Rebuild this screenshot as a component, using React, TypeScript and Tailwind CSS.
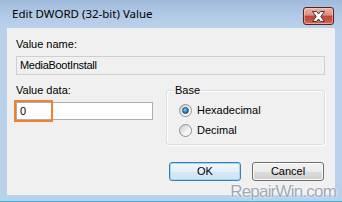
import React from "react";

function Radio({ checked, label }: { checked: boolean; label: string }) {
  return (
    <div className="flex items-center h-[20px]">
      <div className="w-[13px] h-[13px] rounded-full border border-[#8f8f8f] bg-[linear-gradient(135deg,#c9c9c9_0%,#f4f4f4_60%,#ffffff_100%)] flex items-center justify-center">
        {checked && (
          <div className="w-[7px] h-[7px] rounded-full bg-[radial-gradient(circle_at_40%_35%,#8fd3f7_0%,#2a7dbb_55%,#174f84_100%)] border border-[#1e4f79]" />
        )}
      </div>
      <span className="ml-[5px] text-[11px] leading-[13px] text-black">{label}</span>
    </div>
  );
}

export default function App() {
  return (
    <div className="relative w-[342px] h-[202px] overflow-hidden bg-[#b9d1ea] flex flex-col font-['Liberation_Sans',Arial,sans-serif] text-black">
      {/* Title bar */}
      <div className="h-[28px] flex items-start bg-[linear-gradient(to_bottom,#9fbadb,#b3cbe6_60%,#b9d1ea)]">
        <span className="ml-[12px] mt-[7px] text-[11.5px] leading-[14px] font-['Noto_Sans',sans-serif] text-black">
          Edit DWORD (32-bit) Value
        </span>
        <div className="ml-auto mt-[7px] mr-[8px] w-[31px] h-[18px] rounded-[3px] border border-[#5a2020] bg-[linear-gradient(to_bottom,#ebb4a8_0%,#dc8d7f_45%,#c4463a_50%,#c9503f_75%,#d7705d_100%)] flex items-center justify-center shadow-[inset_0_0_0_1px_rgba(255,220,210,0.5)]">
          <svg width="13" height="11" viewBox="0 0 13 11">
            <polygon
              points="0.5,0.5 4.5,0.5 6.5,3 8.5,0.5 12.5,0.5 8.8,5.5 12.5,10.5 8.5,10.5 6.5,8 4.5,10.5 0.5,10.5 4.2,5.5"
              fill="#ffffff"
              stroke="#3b3b3b"
              strokeWidth="1"
              strokeLinejoin="round"
            />
          </svg>
        </div>
      </div>

      {/* Client area */}
      <div className="mx-[7px] h-[167px] bg-[#f0f0f0] flex flex-col pl-[9px] pr-[10px] pt-[10px]">
        <div className="text-[11px] leading-[13px]">Value name:</div>
        <div className="mt-[5px] h-[19px] border border-[#cfcfcf] bg-[#f0f0f0] flex items-center pl-[3px] text-[11px] leading-[13px] tracking-[-0.3px]">
          MediaBootInstall
        </div>

        <div className="flex mt-[9px]">
          <div className="w-[137px] flex flex-col">
            <div className="text-[11px] leading-[13px]">Value data:</div>
            <div className="relative mt-[5px] h-[18px] border border-[#abadb3] bg-white flex items-center pl-[3px] text-[11px] leading-[13px]">
              0
              <div className="absolute left-[-3px] top-[-3px] w-[39px] h-[22px] border-2 border-[#f0812e]" />
            </div>
          </div>

          <div className="relative ml-[13px] flex-1 mt-[6px] h-[55px] rounded-[3px] border border-[#d5dfe5] shadow-[inset_1px_1px_0_#ffffff,1px_1px_0_#ffffff] pl-[12px] pt-[9px] flex flex-col">
            <span className="absolute left-[7px] top-[-7px] px-[1px] bg-[#f0f0f0] text-[11px] leading-[13px]">
              Base
            </span>
            <Radio checked label="Hexadecimal" />
            <Radio checked={false} label="Decimal" />
          </div>
        </div>

        <div className="flex justify-end gap-[11px] mt-[17px] mr-[1px]">
          <div className="w-[72px] h-[19px] rounded-[3px] border border-[#3c7fb1] bg-[linear-gradient(to_bottom,#f0f7fc_0%,#e4f0f9_50%,#d4e7f5_51%,#cfe4f3_100%)] shadow-[inset_0_0_0_1px_#9fd6f2] flex items-center justify-center text-[11px] leading-[13px]">
            OK
          </div>
          <div className="w-[72px] h-[19px] rounded-[3px] border border-[#707070] bg-[linear-gradient(to_bottom,#f2f2f2_0%,#ebebeb_50%,#dddddd_51%,#cfcfcf_100%)] shadow-[inset_0_0_0_1px_#fcfcfc] flex items-center justify-center text-[11px] leading-[13px]">
            Cancel
          </div>
        </div>
      </div>

      <div className="flex-1" />
      <div className="h-[1px] bg-[#2ab4d6]" />

      <span className="absolute right-[6px] bottom-[1px] text-[17px] leading-[19px] tracking-[-0.8px] text-[#9ea8b4] [text-shadow:0_0_2px_#ffffff,0_0_1px_#ffffff]">
        RepairWin.com
      </span>
    </div>
  );
}
